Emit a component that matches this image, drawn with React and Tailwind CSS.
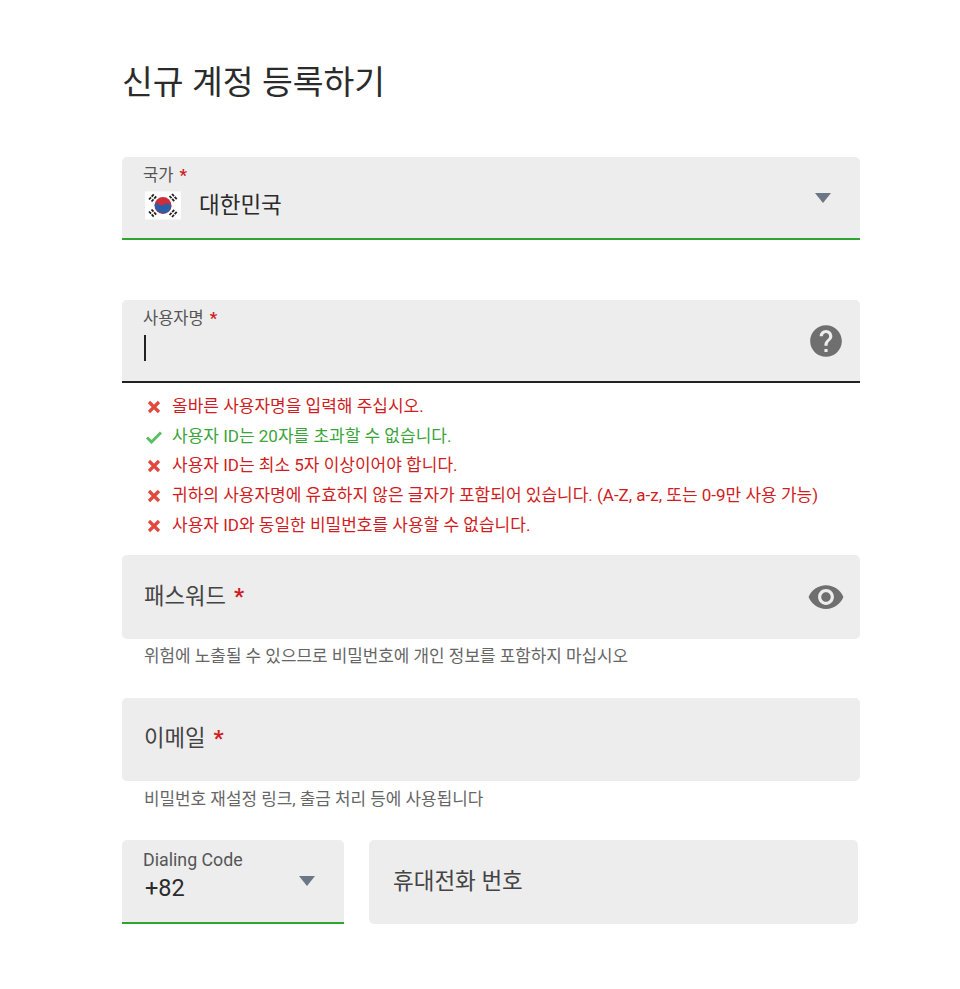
import { MdVisibility, MdHelp } from "react-icons/md";

const font = "font-['Roboto','Noto_Sans_CJK_KR',sans-serif]";

const rules = [
  { ok: false, text: "올바른 사용자명을 입력해 주십시오." },
  { ok: true, text: "사용자 ID는 20자를 초과할 수 없습니다." },
  { ok: false, text: "사용자 ID는 최소 5자 이상이어야 합니다." },
  { ok: false, text: "귀하의 사용자명에 유효하지 않은 글자가 포함되어 있습니다. (A-Z, a-z, 또는 0-9만 사용 가능)" },
  { ok: false, text: "사용자 ID와 동일한 비밀번호를 사용할 수 없습니다." },
];

const Star = () => <span className="text-[#d01c22] font-bold ml-[6px]">*</span>;
const BigStar = () => <span className="text-[#d01c22] font-bold ml-[8px]">*</span>;

const Caret = () => (
  <svg width="16" height="10" viewBox="0 0 16 10" className="shrink-0">
    <path d="M0 0h16L8 10z" fill="#6b7785" />
  </svg>
);

const Cross = () => (
  <svg width="14" height="14" viewBox="0 0 14 14" className="shrink-0">
    <path d="M2 2l10 10M12 2L2 12" stroke="#e2483d" strokeWidth="3.200" />
  </svg>
);

const Tick = () => (
  <svg width="18" height="14" viewBox="0 0 18 14" className="shrink-0 -ml-[2px] -mr-[2px]">
    <path d="M2 7.500l4.500 4.500L16 2.500" fill="none" stroke="#5cbf63" strokeWidth="3" />
  </svg>
);

const Flag = () => (
  <svg width="36" height="29" viewBox="0 0 36 28" className="shrink-0">
    <rect width="36" height="28" fill="#fff" />
    <circle cx="18" cy="14" r="8.500" fill="#cd2e3a" />
    <path d="M9.700 12.500a8.500 8.500 0 0 0 16.800 2.500c-1.500-2.500-4-3.500-6.500-2.500s-4 2.500-6 .5-3.500-2-4.300-.5z" fill="#2a5ea8" />
    <g stroke="#222" strokeWidth="1.800" strokeDasharray="3 1">
      <path d="M4 8l5-5.500M6.500 10l5-5.500" />
      <path d="M24.500 4.500l5 5.500M27 2.500l5 5.500" />
      <path d="M4 20l5 5.500M6.500 18l5 5.500" />
      <path d="M24.500 23.500l5-5.500M27 25.500l5-5.500" />
    </g>
  </svg>
);

export default function App() {
  return (
    <div className={`${font} w-[960px] h-[989px] bg-white overflow-hidden pl-[122px] pr-[100px] pt-[62px] text-[#333]`}>
      <h1 className="text-[33.500px] leading-[42px] text-[#2b2b2b] mb-[53px]">신규 계정 등록하기</h1>

      <div className="h-[83px] bg-[#ededed] rounded-t-[5px] border-b-2 border-[#2fa52f] pl-[21px] pr-[29px] pt-[9px] flex justify-between">
        <div>
          <div className="text-[16.500px] leading-5 text-[#555]">국가<Star /></div>
          <div className="flex items-center gap-[18px] mt-[4px] ml-[2px]">
            <Flag />
            <span className="text-[22.500px] leading-[30px] text-[#2b2b2b]">대한민국</span>
          </div>
        </div>
        <div className="pt-[27px]"><Caret /></div>
      </div>

      <div className="mt-[60px] h-[83px] bg-[#ededed] rounded-t-[5px] border-b-2 border-[#222] pl-[21px] pr-[15px] pt-[9px] flex justify-between">
        <div>
          <div className="text-[16.500px] leading-5 text-[#555]">사용자명<Star /></div>
          <div className="w-[2px] h-[26px] bg-[#222] mt-[6px] ml-[1px]" />
        </div>
        <MdHelp size={38} className="text-[#6f6f6f] mt-[13px]" />
      </div>

      <ul className="mt-[9px] ml-[25px] text-[17px] leading-[29.700px] text-[#d01c22]">
        {rules.map((r) => (
          <li key={r.text} className={`flex items-center gap-[11px] ${r.ok ? "text-[#3aa53a]" : ""}`}>
            {r.ok ? <Tick /> : <Cross />}
            <span>{r.text}</span>
          </li>
        ))}
      </ul>

      <div className="mt-[14px] h-[84px] bg-[#ededed] rounded-[5px] pl-[22px] pr-[15px] flex items-center justify-between">
        <span className="text-[22.300px] text-[#444]">패스워드<BigStar /></span>
        <MdVisibility size={38} className="text-[#6f6f6f]" />
      </div>
      <p className="ml-[22px] mt-[6px] text-[16.900px] leading-[22px] text-[#666]">위험에 노출될 수 있으므로 비밀번호에 개인 정보를 포함하지 마십시오</p>

      <div className="mt-[31px] h-[83px] bg-[#ededed] rounded-[5px] pl-[22px] flex items-center">
        <span className="text-[22.300px] text-[#444]">이메일<BigStar /></span>
      </div>
      <p className="ml-[22px] mt-[7px] text-[16.900px] leading-[22px] text-[#666]">비밀번호 재설정 링크, 출금 처리 등에 사용됩니다</p>

      <div className="mt-[30px] flex gap-[25px]">
        <div className="w-[222px] h-[84px] bg-[#ededed] rounded-t-[5px] border-b-2 border-[#2fa52f] pl-[21px] pr-[29px] pt-[10px] flex justify-between">
          <div>
            <div className="text-[17.800px] leading-5 text-[#555]">Dialing Code</div>
            <div className="text-[23.500px] leading-[30px] mt-[3px] ml-[2px] text-[#2b2b2b]">+82</div>
          </div>
          <div className="pt-[26px]"><Caret /></div>
        </div>
        <div className="w-[489px] h-[84px] bg-[#ededed] rounded-[5px] pl-[24px] flex items-center">
          <span className="text-[22.500px] text-[#444]">휴대전화 번호</span>
        </div>
      </div>
    </div>
  );
}
